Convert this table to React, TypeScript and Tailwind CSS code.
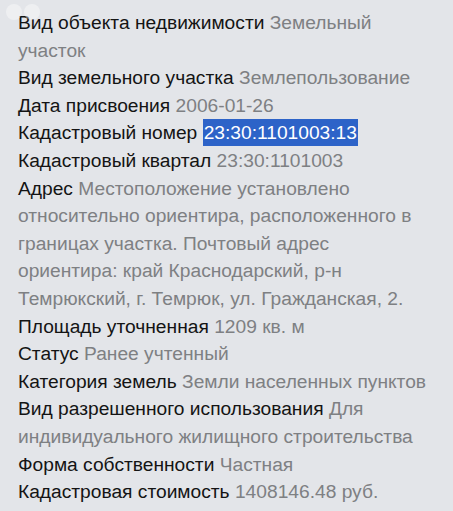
const rows: { label: string; value: React.ReactNode }[] = [
  { label: 'Вид объекта недвижимости', value: <>Земельный<br />участок</> },
  { label: 'Вид земельного участка', value: 'Землепользование' },
  { label: 'Дата присвоения', value: '2006-01-26' },
  {
    label: 'Кадастровый номер',
    value: <span className="bg-[#2d63c8] px-[1px] py-[3px] text-white">23:30:1101003:13</span>,
  },
  { label: 'Кадастровый квартал', value: '23:30:1101003' },
  {
    label: 'Адрес',
    value: (
      <>
        Местоположение установлено<br />
        относительно ориентира, расположенного в<br />
        границах участка. Почтовый адрес<br />
        ориентира: край Краснодарский, р-н<br />
        Темрюкский, г. Темрюк, ул. Гражданская, 2.
      </>
    ),
  },
  { label: 'Площадь уточненная', value: '1209 кв. м' },
  { label: 'Статус', value: 'Ранее учтенный' },
  { label: 'Категория земель', value: 'Земли населенных пунктов' },
  {
    label: 'Вид разрешенного использования',
    value: <>Для<br />индивидуального жилищного строительства</>,
  },
  { label: 'Форма собственности', value: 'Частная' },
  { label: 'Кадастровая стоимость', value: '1408146.48 руб.' },
]

export default function App() {
  return (
    <div className="relative h-[511px] w-[453px] overflow-hidden bg-[#e3e5e9] font-['Liberation_Sans',Arial,sans-serif]">
      {/* faint watermark */}
      <div className="absolute left-[6px] top-[4px] flex gap-[2px] opacity-40">
        <div className="h-[16px] w-[16px] rounded-full bg-white" />
        <div className="h-[16px] w-[16px] rounded-full bg-white" />
      </div>
      <div className="whitespace-nowrap pl-[18px] pt-[9px] text-[19.2px] leading-[27.6px]">
        {rows.map((r) => (
          <div key={r.label}>
            <span className="text-[#141414]">{r.label}</span>{' '}
            <span className="text-[#7e8083]">{r.value}</span>
          </div>
        ))}
      </div>
    </div>
  )
}
